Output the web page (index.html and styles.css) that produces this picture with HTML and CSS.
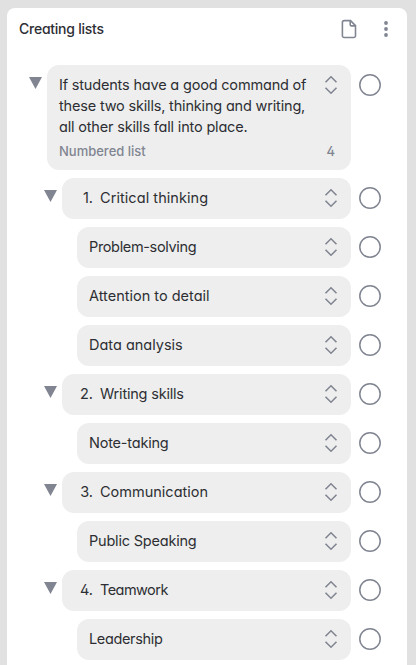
FILE: index.html
```html
<!DOCTYPE html>
<html lang="en">
<head>
    <meta charset="UTF-8">
    <meta name="viewport" content="width=device-width, initial-scale=1.0">
    <title>Creating lists</title>
    <link rel="stylesheet" href="styles.css">
</head>
<body>
    <svg class="symbols">
        <symbol id="sort" viewBox="0 0 14 20">
            <path d="M1.500 7.200 7 1.800l5.500 5.400M1.500 12.800 7 18.200l5.500-5.400"/>
        </symbol>
        <symbol id="circle" viewBox="0 0 22 22">
            <circle cx="11" cy="11" r="10.200"/>
        </symbol>
    </svg>

    <div class="panel">
        <div class="header">
            <h1>Creating lists</h1>
            <svg class="page-icon" viewBox="0 0 16 20">
                <path d="M3.200 1.600h6.300l5 5V16.700a1.800 1.800 0 0 1-1.800 1.800H3.200a1.800 1.800 0 0 1-1.800-1.800V3.400a1.800 1.800 0 0 1 1.800-1.800z"/>
                <path d="M9.200 1.700v4a1.200 1.200 0 0 0 1.200 1.200h4"/>
            </svg>
            <svg class="menu-icon" viewBox="0 0 4 16">
                <circle cx="2" cy="2" r="1.900"/>
                <circle cx="2" cy="8" r="1.900"/>
                <circle cx="2" cy="14" r="1.900"/>
            </svg>
        </div>

        <div class="list" id="list">
            <div class="row level-1">
                <div class="toggle"></div>
                <div class="card">
                    <div class="line">
                        <p class="text">If students have a good command of<br>these two skills, thinking and writing,<br>all other skills fall into place.</p>
                        <svg class="sort"><use href="#sort"/></svg>
                    </div>
                    <div class="info"><span>Numbered list</span><span class="count">4</span></div>
                </div>
                <svg class="radio"><use href="#circle"/></svg>
            </div>
        </div>
    </div>

    <script>
        const list = document.getElementById('list');

        const items = [
            { num: "1.", text: "Critical thinking", spacing: "wide" },
            { text: "Problem-solving", spacing: "tight" },
            { text: "Attention to detail" },
            { text: "Data analysis" },
            { num: "2.", text: "Writing skills", spacing: "snug" },
            { text: "Note-taking", spacing: "snug" },
            { num: "3.", text: "Communication" },
            { text: "Public Speaking", spacing: "snug" },
            { num: "4.", text: "Teamwork", spacing: "tighter" },
            { text: "Leadership", spacing: "tight" }
        ];

        items.forEach(item => {
            const row = document.createElement('div');
            row.className = item.num ? 'row level-2' : 'row level-3';
            row.innerHTML = `
                ${item.num ? '<div class="toggle"></div>' : ''}
                <div class="card">
                    <div class="line">
                        ${item.num ? `<span class="num">${item.num}</span>` : ''}
                        <p class="text ${item.spacing || ''}">${item.text}</p>
                        <svg class="sort"><use href="#sort"/></svg>
                    </div>
                </div>
                <svg class="radio"><use href="#circle"/></svg>`;
            list.appendChild(row);
        });
    </script>
</body>
</html>
```
FILE: styles.css
```css
* { box-sizing: border-box; }
body { margin: 0; height: 665px; overflow: hidden; padding: 8px 9px 0 7px; background: #e1e1e1; color: #2d2e33; font-family: Inter, "Liberation Sans", sans-serif; font-size: 14.5px; line-height: 21px; font-feature-settings: "cv11", "cv02"; }
h1, p { margin: 0; }
.symbols { display: none; }
.panel { height: 670px; background: #fff; border-radius: 8px; }
.header { display: flex; align-items: center; height: 42px; padding: 0 19px 0 12px; }
h1 { flex: 1; padding-bottom: 1px; font-size: 14px; line-height: 20px; font-weight: 500; letter-spacing: -0.25px; }
.page-icon { width: 16px; height: 20px; margin-right: 27px; fill: none; stroke: #808591; stroke-width: 1.6; }
.menu-icon { width: 4px; height: 16px; fill: #808591; }
.list { display: flex; flex-direction: column; gap: 8px; padding: 15px 26px 0 0; }
.row { display: flex; align-items: flex-start; }
.level-1 { padding-left: 22px; }
.level-2 { padding-left: 37px; }
.level-3 { padding-left: 70px; }
.toggle { width: 13px; height: 12px; margin: 12px 5px 0 0; background: #808591; clip-path: polygon(0 0, 100% 0, 50% 100%); }
.card { flex: 1; min-height: 41px; padding: 9px 13px 9px 12px; background: #eee; border-radius: 12px; }
.level-1 .card { height: 105px; }
.level-1 .text { letter-spacing: -0.18px; }
.line { display: flex; align-items: flex-start; }
.num { width: 19px; margin-right: 7px; text-align: right; white-space: nowrap; }
.text { flex: 1; white-space: nowrap; }
.wide { letter-spacing: 0.06px; }
.snug { letter-spacing: -0.2px; }
.tight { letter-spacing: -0.35px; }
.tighter { letter-spacing: -0.55px; }
.sort { width: 14px; height: 20px; margin-top: 1px; fill: none; stroke: #808591; stroke-width: 1.6; }
.info { display: flex; justify-content: space-between; margin-top: 4px; padding-right: 3px; color: #808591; font-size: 13px; font-weight: 500; }
.radio { width: 22px; height: 22px; margin: 9px 0 0 8px; fill: none; stroke: #808591; stroke-width: 1.5; }
```
